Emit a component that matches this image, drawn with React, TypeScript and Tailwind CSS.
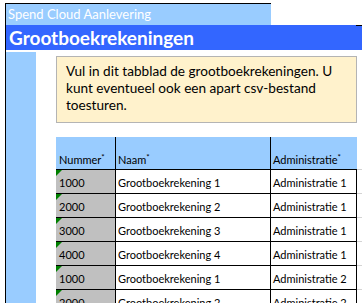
import React from "react";

const rows = [
  { nr: "1000", naam: "Grootboekrekening 1", admin: "Administratie 1" },
  { nr: "2000", naam: "Grootboekrekening 2", admin: "Administratie 1" },
  { nr: "3000", naam: "Grootboekrekening 3", admin: "Administratie 1" },
  { nr: "4000", naam: "Grootboekrekening 4", admin: "Administratie 1" },
  { nr: "1000", naam: "Grootboekrekening 1", admin: "Administratie 2" },
  { nr: "2000", naam: "Grootboekrekening 2", admin: "Administratie 2" },
];

// little green comment flag in the top-left corner of a cell
function Marker() {
  return (
    <svg className="absolute left-0 top-0" width="6" height="6" viewBox="0 0 6 6">
      <polygon points="0,0 6,0 0,6" fill="#008000" />
    </svg>
  );
}

function Head({ label }: { label: string }) {
  return (
    <span className="whitespace-nowrap">
      {label}
      <span className="relative -top-[4px] text-[8px]">*</span>
    </span>
  );
}

export default function App() {
  return (
    <div className="w-[362px] h-[303px] overflow-hidden bg-white pt-[3px] text-black font-['Lato',sans-serif]">
      <div className="ml-[5px] h-[300px] border-l border-black">
        {/* sheet caption */}
        <div className="w-[265px] h-[22px] border-t border-black bg-[#99ccff] pl-[2px] text-[13px] leading-[20px] text-white whitespace-nowrap">
          Spend Cloud Aanlevering
        </div>
        {/* title bar */}
        <div className="h-[25px] bg-[#3366ff] flex flex-col">
          <div className="h-px flex justify-end">
            <div className="w-[6px] h-px bg-black" />
          </div>
          <div className="pl-[3px] text-[19px] leading-[23px] font-bold text-white whitespace-nowrap">
            Grootboekrekeningen
          </div>
        </div>
        <div className="flex mt-[2px]">
          <div className="w-[30px] h-[260px] bg-[#99ccff]" />
          <div className="flex-1 pl-[20px] pt-[4px]">
            <div className="w-[301px] h-[67px] border border-[#b4b4b4] bg-[#fff2cc] pl-[9px] pt-[6px] text-[13.6px] leading-[17px] whitespace-nowrap">
              Vul in dit tabblad de grootboekrekeningen. U
              <br />
              kunt eventueel ook een apart csv-bestand
              <br />
              toesturen.
            </div>
            <div className="mt-[14px] text-[11px] leading-[14px] whitespace-nowrap">
              {/* header */}
              <div className="flex h-[32px]">
                <div className="w-[59px] bg-[#99ccff] flex items-end pl-[3px] pb-[1px]">
                  <Head label="Nummer" />
                </div>
                <div className="w-[155px] bg-[#99ccff] border-l border-black flex items-end pl-[2px] pb-[1px]">
                  <Head label="Naam" />
                </div>
                <div className="w-[87px] bg-[#99ccff] border-l border-black flex items-end pl-[2px] pb-[1px]">
                  <Head label="Administratie" />
                </div>
              </div>
              {rows.map((r, i) => (
                <div key={i} className="flex h-[24px]">
                  <div className="relative w-[59px] bg-[#c0c0c0] border-t border-black flex items-end pl-[3px] pb-[3px]">
                    <Marker />
                    <span>{r.nr}</span>
                  </div>
                  <div className="w-[155px] border-t border-l border-black flex items-end pl-[2px] pb-[3px]">
                    <span>{r.naam}</span>
                  </div>
                  <div className="w-[87px] border-t border-l border-r border-black flex items-end pl-[2px] pb-[3px]">
                    <span>{r.admin}</span>
                  </div>
                  <div className="w-[5px] border-t border-[#d4d4d4]" />
                </div>
              ))}
            </div>
          </div>
        </div>
      </div>
    </div>
  );
}
